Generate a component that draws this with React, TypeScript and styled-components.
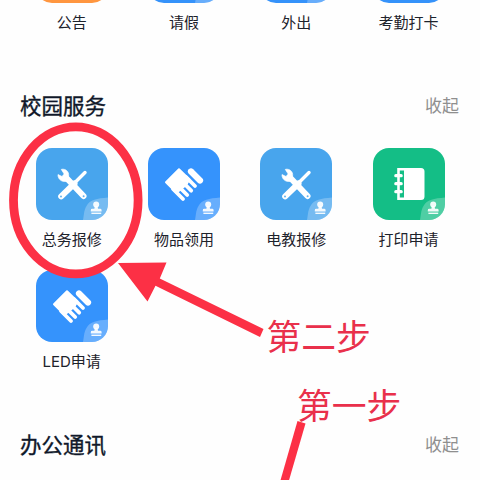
import React from 'react';
import styled, { createGlobalStyle } from 'styled-components';

const GlobalStyle = createGlobalStyle`
  body {
    margin: 0;
    background: #fefefe;
    font-family: 'Noto Sans CJK SC', sans-serif;
  }
`;

const Screen = styled.main`
  position: relative;
  width: 480px;
  height: 480px;
  overflow: hidden;
  background: #fefefe;
`;

const Scroller = styled.div`
  display: flex;
  flex-direction: column;
  margin-top: -69px;
`;

const Grid = styled.div`
  display: grid;
  grid-template-columns: repeat(4, 112.3px);
  row-gap: 19px;
  padding-left: 15.5px;
`;

const Item = styled.div`
  display: flex;
  flex-direction: column;
  align-items: center;
  gap: 9px;
`;

const Tile = styled.div<{ $color: string }>`
  width: 72px;
  height: 72px;
  border-radius: 16px;
  overflow: hidden;
  background: ${(p) => p.$color};

  svg {
    display: block;
  }
`;

const Label = styled.span`
  height: 22px;
  font-family: Inter, 'Noto Sans CJK SC', sans-serif;
  font-size: 15px;
  line-height: 22px;
  white-space: nowrap;
  color: #1d222b;
`;

const SectionHeader = styled.header`
  display: flex;
  align-items: center;
  justify-content: space-between;
  height: 30px;
  margin: 56px 21px 28px 20px;
`;

const Title = styled.h2`
  margin: 0;
  font-size: 21.5px;
  line-height: 30px;
  font-weight: 400;
  -webkit-text-stroke: 0.35px #10182a;
  color: #10182a;
`;

const Toggle = styled.span`
  font-size: 17px;
  line-height: 30px;
  color: #8f8f8f;
`;

const Markup = styled.svg`
  position: absolute;
  inset: 0;
`;

const Note = styled.span<{ $x: number; $y: number }>`
  position: absolute;
  left: ${(p) => p.$x}px;
  top: ${(p) => p.$y}px;
  font-size: 34.8px;
  line-height: 44px;
  white-space: nowrap;
  color: #e9304b;
`;

type Glyph = 'tools' | 'hand' | 'book' | 'none';

const Tools = () => (
  <g>
    <path d="M49 24.5 38.5 35" stroke="#fff" strokeWidth="3.4" strokeLinecap="round" />
    <path d="M38.5 35.5 25.2 48.3" stroke="#fff" strokeWidth="6" strokeLinecap="round" />
    <path d="M30 29.5 47.5 48" stroke="#fff" strokeWidth="6" strokeLinecap="round" />
    <path
      d="M25.3 21.4C29.5 20.3 33.3 23.7 32.6 28L30 33.3C26 34.2 21.8 31.4 22 26.6L26 28.5 28.2 26Z"
      fill="#fff"
      stroke="#fff"
      strokeWidth=".7"
      strokeLinejoin="round"
    />
    <circle cx="25" cy="48.5" r="1" fill="#63b2ed" />
    <circle cx="47.6" cy="48.3" r="1" fill="#63b2ed" />
  </g>
);

const Hand = () => (
  <g stroke="#fff" strokeLinecap="round" strokeLinejoin="round">
    <path d="M18 34.3 31 21.3 41.5 31.5 38 37 28.5 44.8Z" fill="#fff" strokeWidth="2" />
    <path d="M43 23.5 52 32.5" strokeWidth="6.2" />
    <path d="M38 29 47 38M33 32.5 43.2 42.7M29 36.8 39.2 47M25 41 35 51" strokeWidth="3.8" />
  </g>
);

const Book = () => (
  <g>
    <path
      fillRule="evenodd"
      fill="#fff"
      d="M24.2 20H48Q51.5 20 51.5 23.5V48.5Q51.5 52 48 52H24.2ZM26.8 22.6V49.4H31V22.6Z"
    />
    <path d="M22.8 27.7H28.2M22.8 35.7H28.2M22.8 43.7H28.2" stroke="#fff" strokeWidth="3.2" strokeLinecap="round" />
  </g>
);

const Badge = () => (
  <g>
    <path d="M47 72C48 68 47.5 63 50.5 58C54 51.5 61 50.5 72 49.5V72Z" fill="#fff" fillOpacity=".25" />
    <g fill="#fff" fillOpacity=".92">
      <circle cx="60.2" cy="56.6" r="3" />
      <path d="M58.8 58H61.6L62 60.8H64.2Q65.6 60.8 65.6 62.2V63.6H54.8V62.2Q54.8 60.8 56.2 60.8H58.4Z" />
      <rect x="55.4" y="64.6" width="9.8" height="1.4" />
    </g>
  </g>
);

const glyphs: Record<Glyph, React.ReactNode> = {
  tools: <Tools />,
  hand: <Hand />,
  book: <Book />,
  none: null,
};

interface Service {
  name: string;
  color: string;
  glyph: Glyph;
  badge?: boolean;
}

const attendance: Service[] = [
  { name: '公告', color: '#ff963f', glyph: 'none' },
  { name: '请假', color: '#3592fa', glyph: 'none', badge: true },
  { name: '外出', color: '#3592fa', glyph: 'none', badge: true },
  { name: '考勤打卡', color: '#3592fa', glyph: 'none' },
];

const campus: Service[] = [
  { name: '总务报修', color: '#48a5ed', glyph: 'tools', badge: true },
  { name: '物品领用', color: '#3593fc', glyph: 'hand', badge: true },
  { name: '电教报修', color: '#48a5ed', glyph: 'tools', badge: true },
  { name: '打印申请', color: '#14be86', glyph: 'book', badge: true },
  { name: 'LED申请', color: '#3593fc', glyph: 'hand', badge: true },
];

const Services = ({ items }: { items: Service[] }) => (
  <Grid>
    {items.map((s) => (
      <Item key={s.name}>
        <Tile $color={s.color}>
          <svg width="72" height="72" viewBox="0 0 72 72" fill="none">
            {glyphs[s.glyph]}
            {s.badge && <Badge />}
          </svg>
        </Tile>
        <Label>{s.name}</Label>
      </Item>
    ))}
  </Grid>
);

const Header = ({ title }: { title: string }) => (
  <SectionHeader>
    <Title>{title}</Title>
    <Toggle>收起</Toggle>
  </SectionHeader>
);

export default function App() {
  return (
    <>
      <GlobalStyle />
      <Screen>
        <Scroller>
          <Services items={attendance} />
          <Header title="校园服务" />
          <Services items={campus} />
          <Header title="办公通讯" />
        </Scroller>
        <Markup width="480" height="480" viewBox="0 0 480 480" fill="none">
          <ellipse cx="75.8" cy="200.3" rx="62.3" ry="73.5" stroke="#fc3045" strokeWidth="8.8" />
          <path d="M118 263 166.5 262.5 159.8 278.5 263.5 329 260 337 155.5 285.7 147.5 301.5Z" fill="#fc3045" />
          <path d="M297.5 421 305.5 423.5 288.5 482H280Z" fill="#fc3045" />
        </Markup>
        <Note $x={266.5} $y={313}>第二步</Note>
        <Note $x={297} $y={381.5}>第一步</Note>
      </Screen>
    </>
  );
}
